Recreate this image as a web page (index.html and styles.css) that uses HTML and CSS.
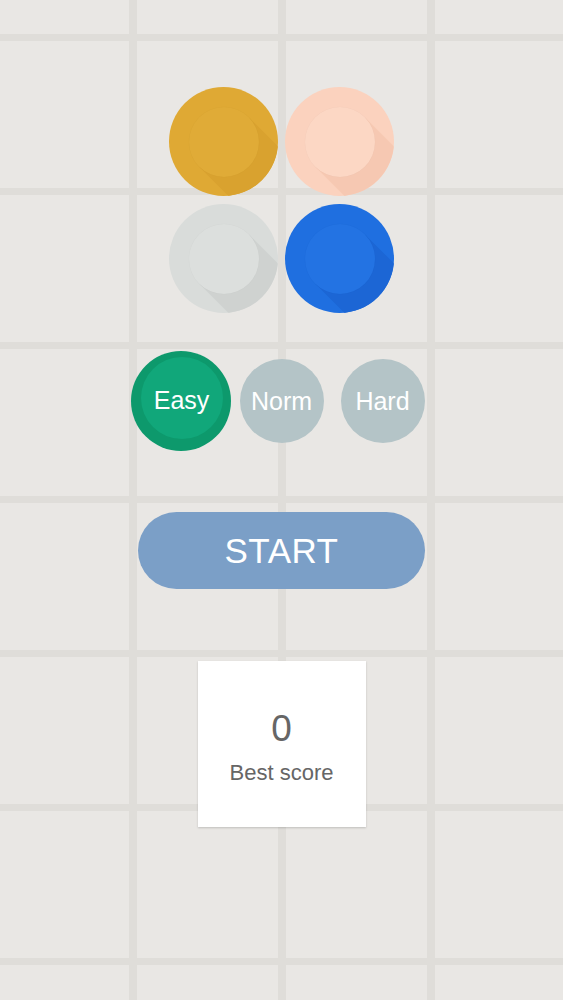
FILE: index.html
```html
<!DOCTYPE html>
<html lang="en">
<head>
    <meta charset="UTF-8">
    <meta name="viewport" content="width=device-width, initial-scale=1.0">
    <title>Dots</title>
    <link rel="stylesheet" href="styles.css">
</head>
<body>
    <main class="screen">
        <!-- colour preview of the four dots -->
        <div class="balls">
            <div class="ball ball-gold"><span class="ball-face"></span></div>
            <div class="ball ball-peach"><span class="ball-face"></span></div>
            <div class="ball ball-gray"><span class="ball-face"></span></div>
            <div class="ball ball-blue"><span class="ball-face"></span></div>
        </div>

        <div class="levels">
            <div class="level-slot">
                <button class="level active"><span class="level-face">Easy</span></button>
            </div>
            <div class="level-slot">
                <button class="level"><span class="level-face">Norm</span></button>
            </div>
            <div class="level-slot">
                <button class="level"><span class="level-face">Hard</span></button>
            </div>
        </div>

        <button class="start">START</button>

        <div class="best">
            <div class="best-value">0</div>
            <div class="best-label">Best score</div>
        </div>
    </main>
</body>
</html>
```

FILE: styles.css
```css
body {
    margin: 0;
    min-height: 1000px;
    font-family: "Liberation Sans", Arial, sans-serif;
    background-color: #e9e7e4;
    background-image:
        linear-gradient(to right, #dfddd9 8px, transparent 8px),
        linear-gradient(to bottom, #dfddd9 7px, transparent 7px);
    background-size: 149px 154px;
    background-position: 129px 34px;
}

.screen { display: flex; flex-direction: column; align-items: center; padding-top: 87px; }

/* dots */
.balls { display: grid; grid-template-columns: repeat(2, 109px); grid-auto-rows: 109px; gap: 8px 7px; }
.ball { position: relative; border-radius: 50%; overflow: hidden; display: flex; align-items: center; justify-content: center; background: var(--base); }
.ball::before {
    content: "";
    position: absolute;
    left: 19.5px;
    top: 54.5px;
    width: 70px;
    height: 110px;
    background: var(--shade);
    transform-origin: 50% 0;
    transform: rotate(-45deg);
}
.ball-face { position: relative; width: 70px; height: 70px; border-radius: 50%; background: var(--face); box-shadow: 0 0 1px rgba(0, 0, 0, 0.06); }

.ball-gold  { --base: #dfa934; --face: #e0ab37; --shade: #d9a22f; }
.ball-peach { --base: #fbd2be; --face: #fcd7c4; --shade: #f6c8b2; }
.ball-gray  { --base: #d9dcda; --face: #dcdfdd; --shade: #cfd2d0; }
.ball-blue  { --base: #1f6fe0; --face: #2373e3; --shade: #1c66d5; }

/* difficulty */
.levels { display: grid; grid-template-columns: repeat(3, 101px); height: 100px; margin-top: 38px; }
.level-slot { display: flex; align-items: center; justify-content: center; }
.level {
    display: flex; align-items: center; justify-content: center;
    width: 84px; height: 84px; padding: 0; border: none; border-radius: 50%;
    background: #b4c4c7; font-family: inherit; cursor: pointer;
}
.level-face {
    display: flex; align-items: center; justify-content: center;
    width: 84px; height: 84px; border-radius: 50%;
    color: #fff; font-size: 25px;
}
.level.active { width: 100px; height: 100px; background: #0d996c; }
.level.active .level-face { width: 82px; height: 82px; padding-top: 4px; box-sizing: border-box; background: #11a77a; transform: translate(1px, -3px); }

/* start */
.start {
    width: 287px; height: 77px; margin-top: 61px;
    border: none; border-radius: 39px;
    background: #7b9fc7; color: #fff;
    font-family: inherit; font-size: 35px; letter-spacing: 0.5px;
}

/* best score */
.best {
    width: 168px; height: 166px; margin-top: 72px;
    display: flex; flex-direction: column; align-items: center; justify-content: center;
    background: #fff; box-shadow: 0 1px 2px rgba(0, 0, 0, 0.18);
    color: #666;
}
.best-value { font-size: 37px; line-height: 42px; margin-top: 6px; }
.best-label { font-size: 22px; line-height: 26px; margin-top: 10px; }
```
